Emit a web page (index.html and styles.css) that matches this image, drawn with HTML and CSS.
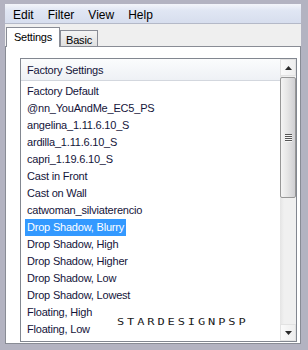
FILE: index.html
```html
<!DOCTYPE html>
<html>
<head>
<meta charset="utf-8">
<link rel="stylesheet" href="styles.css">
</head>
<body>
<div class="window">
  <div class="inner">
    <div class="menubar">
      <span class="menu">Edit</span><span class="menu">Filter</span><span class="menu">View</span><span class="menu">Help</span>
    </div>
    <div class="tabstrip">
      <div class="tab active">Settings</div>
      <div class="tab">Basic</div>
    </div>
    <div class="tabpage">
      <div class="listbox">
        <div class="listcontent">
          <div class="listheader">Factory Settings</div>
          <ul class="items">
            <li><span>Factory Default</span></li>
            <li><span>@nn_YouAndMe_EC5_PS</span></li>
            <li><span>angelina_1.11.6.10_S</span></li>
            <li><span>ardilla_1.11.6.10_S</span></li>
            <li><span>capri_1.19.6.10_S</span></li>
            <li><span>Cast in Front</span></li>
            <li><span>Cast on Wall</span></li>
            <li><span>catwoman_silviaterencio</span></li>
            <li class="selected"><span>Drop Shadow, Blurry</span></li>
            <li><span>Drop Shadow, High</span></li>
            <li><span>Drop Shadow, Higher</span></li>
            <li><span>Drop Shadow, Low</span></li>
            <li><span>Drop Shadow, Lowest</span></li>
            <li><span>Floating, High</span></li>
            <li><span>Floating, Low</span></li>
          </ul>
        </div>
        <div class="scrollbar">
          <div class="sb-btn"><svg width="7" height="4" viewBox="0 0 7 4"><polygon points="0,4 7,4 3.5,0" fill="#2a2a2a"/></svg></div>
          <div class="sb-thumb"><span class="grip"></span><span class="grip"></span><span class="grip"></span><span class="grip"></span></div>
          <div class="sb-track"></div>
          <div class="sb-btn"><svg width="7" height="4" viewBox="0 0 7 4"><polygon points="0,0 7,0 3.5,4" fill="#2a2a2a"/></svg></div>
        </div>
        <div class="watermark">STARDESIGNPSP</div>
      </div>
    </div>
  </div>
</div>
</body>
</html>
```

FILE: styles.css
```css
* { box-sizing: border-box; }
html, body { margin: 0; padding: 0; }
body {
  width: 308px;
  height: 350px;
  overflow: hidden;
  font-family: "Liberation Sans", Arial, sans-serif;
}
.window {
  width: 308px;
  height: 350px;
  background: #b3b3c1;
  padding: 4px 7px 6px 5px;
  display: flex;
}
.inner {
  flex: 1;
  display: flex;
  flex-direction: column;
  background: #efefef;
}
.menubar {
  height: 20px;
  flex: none;
  display: flex;
  align-items: center;
  padding: 2px 0 0 1px;
  background: linear-gradient(#f3f5fa, #e0e6f3 35%, #d7deee);
  border-bottom: 1px solid #b4b9c8;
  font-size: 12px;
  color: #000;
}
.menu {
  padding: 0 7px;
  line-height: 14px;
}
.tabstrip {
  height: 23px;
  flex: none;
  display: flex;
  align-items: flex-end;
  padding-left: 1px;
  margin-bottom: -1px;
  position: relative;
  z-index: 1;
  font-size: 11px;
  letter-spacing: -0.2px;
  color: #000;
}
.tab {
  height: 16px;
  width: 38px;
  margin-bottom: 1px;
  border: 1px solid #898c95;
  border-bottom: none;
  background: linear-gradient(#f4f4f4, #e0e0e0);
  display: flex;
  align-items: center;
  justify-content: center;
  padding-top: 2px;
}
.tab.active {
  height: 20px;
  width: 54px;
  margin-bottom: 0;
  background: #fff;
  padding-top: 0;
  padding-bottom: 2px;
}
.tabpage {
  flex: 1;
  display: flex;
  background: #fff;
  border: 1px solid #898c95;
  padding: 11px 3px 1px 14px;
}
.listbox {
  flex: 1;
  display: flex;
  position: relative;
  border: 1px solid #828790;
  background: #fff;
  overflow: hidden;
}
.listcontent {
  flex: 1;
  display: flex;
  flex-direction: column;
}
.listheader {
  height: 22px;
  flex: none;
  padding-left: 6px;
  line-height: 22px;
  font-size: 11px;
  letter-spacing: -0.2px;
  color: #14143a;
  background: linear-gradient(#fbfcfd, #eef1f5);
  border-bottom: 1px solid #d3d7de;
}
.items {
  list-style: none;
  margin: 0;
  padding: 2px 0 0 4px;
  font-size: 11px;
  letter-spacing: -0.2px;
  color: #14143a;
}
.items li {
  height: 17px;
  line-height: 17px;
}
.items span {
  display: inline-block;
  padding: 0 2px;
}
.items li.selected span {
  background: #3399ff;
  color: #fff;
}
.scrollbar {
  width: 16px;
  flex: none;
  display: flex;
  flex-direction: column;
  background: linear-gradient(90deg, #e4e4e4, #f0f0f0 25%, #f0f0f0);
}
.sb-btn {
  height: 17px;
  flex: none;
  display: flex;
  align-items: center;
  justify-content: center;
  background: linear-gradient(90deg, #fafafa, #eeeeee);
  border: 1px solid #e2e2e2;
}
.sb-thumb {
  height: 121px;
  flex: none;
  margin: 1px 0 0 0;
  border: 1px solid #979797;
  border-radius: 2px;
  background: linear-gradient(90deg, #f4f4f4, #e6e6e6 45%, #cfcfd3);
  display: flex;
  flex-direction: column;
  align-items: center;
  justify-content: center;
  gap: 1px;
}
.grip {
  display: block;
  width: 7px;
  height: 1px;
  background: #555;
  box-shadow: 0 1px 0 #f6f6f6;
}
.sb-track {
  flex: 1;
}
.watermark {
  position: absolute;
  left: 96px;
  top: 260px;
  font-family: "DejaVu Sans Mono", monospace;
  font-size: 8px;
  line-height: 8px;
  letter-spacing: 1.93px;
  color: #1a1a1a;
  transform: scaleX(1.5);
  transform-origin: left top;
  white-space: nowrap;
}
```
